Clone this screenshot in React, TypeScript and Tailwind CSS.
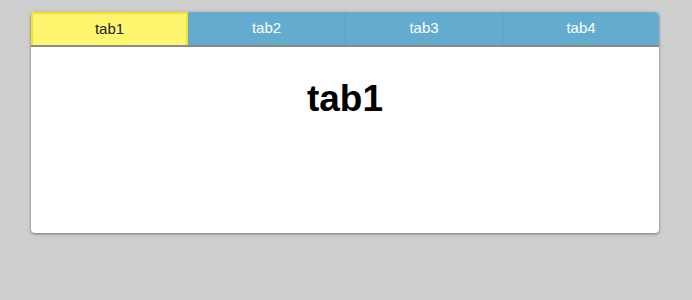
import { useState } from "react";

const tabs = ["tab1", "tab2", "tab3", "tab4"];

export default function App() {
  const [active, setActive] = useState(0);

  return (
    <div
      className="min-h-[300px] bg-[#cecece] pt-3"
      style={{ fontFamily: '"Liberation Sans", Arial, sans-serif' }}
    >
      <div className="ml-[31px] w-[628px] rounded-[4px] bg-white shadow-[0_1px_3px_rgba(0,0,0,0.45)]">
        {/* Tab bar */}
        <div className="grid h-[35px] grid-cols-4 overflow-hidden rounded-t-[4px] border-b-2 border-[#8a8a8a]">
          {tabs.map((tab, i) => (
            <button
              key={tab}
              onClick={() => setActive(i)}
              className={`text-[15px] ${
                active === i
                  ? "border-2 border-b-0 border-[#f2e32c] bg-[#fff56f] text-[#222]"
                  : "border-l border-[#5aa0c3] bg-[#63acd0] text-white first:border-l-0"
              } ${i === active + 1 ? "border-l-0" : ""}`}
            >
              {tab}
            </button>
          ))}
        </div>

        {/* Content */}
        <div className="h-[186px] pt-[31px] text-center">
          <h1 className="text-[37px] font-bold leading-[42px] text-black">
            {tabs[active]}
          </h1>
        </div>
      </div>
    </div>
  );
}
